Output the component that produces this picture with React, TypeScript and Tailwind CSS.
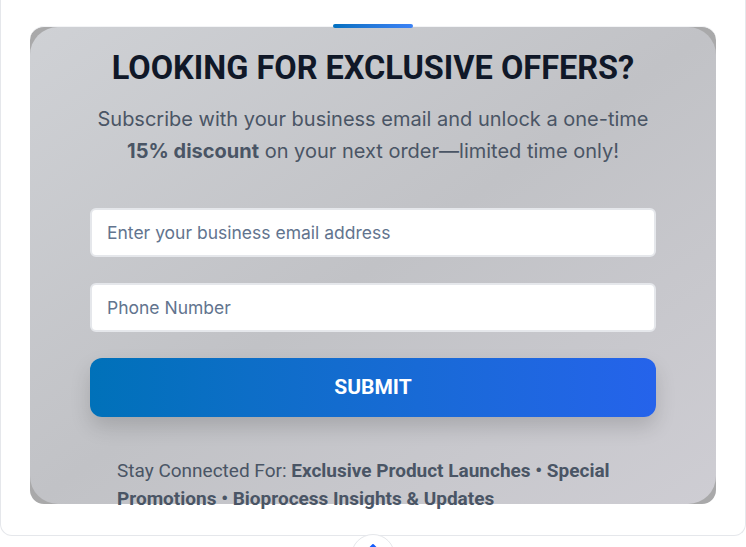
import { ChevronUp } from "lucide-react";

export default function App() {
  return (
    <div className="relative h-[547px] overflow-hidden bg-white font-['Inter',sans-serif]">
      <div className="h-[536px] rounded-b-xl border-x border-b border-gray-200 bg-white px-[29px] pt-[26px]">
        <div className="relative h-[478px] rounded-[14px] border-t border-gray-100 bg-[#a9a9aa]">
          <div className="absolute inset-0 rounded-[28px] bg-gradient-to-br from-[#cfd1d5] via-[#c1c2c6] to-[#cecdd3]" />
          <div className="absolute left-1/2 top-[-3px] h-1 w-20 -translate-x-1/2 rounded-full bg-gradient-to-r from-[#0070c0] to-[#3b82f6]" />

          <div className="relative px-[60px] pt-[21px]">
            <h2 className="text-center font-['Roboto',sans-serif] text-[32.5px] font-bold leading-10 text-gray-900">
              LOOKING FOR EXCLUSIVE OFFERS?
            </h2>
            <p className="mt-[15px] text-center text-[20px] leading-8 text-gray-600">
              Subscribe with your business email and unlock a one-time
              <br />
              <span className="font-bold">15% discount</span> on your next order—limited time only!
            </p>

            <form className="mt-[41px] flex flex-col gap-[26px]">
              <input
                type="email"
                placeholder="Enter your business email address"
                className="h-[49px] w-full rounded-md border-2 border-gray-200 bg-white px-[15px] text-[17.5px] text-gray-800 placeholder:text-slate-500 outline-none"
              />
              <input
                type="tel"
                placeholder="Phone Number"
                className="h-[49px] w-full rounded-md border-2 border-gray-200 bg-white px-[15px] text-[17.5px] text-gray-800 placeholder:text-slate-500 outline-none"
              />
              <button
                type="button"
                className="h-[59px] w-full rounded-xl bg-gradient-to-r from-[#0071b9] to-[#2563eb] font-['Roboto',sans-serif] text-[21px] font-bold text-white shadow-[0_10px_20px_rgba(0,0,0,0.15)]"
              >
                SUBMIT
              </button>
            </form>

            <p className="mt-10 pl-[27px] pr-[20px] font-['Roboto',sans-serif] text-[19px] leading-7 text-gray-600">
              Stay Connected For:{" "}
              <span className="font-bold">
                Exclusive Product Launches • Special Promotions • Bioprocess Insights &amp; Updates
              </span>
            </p>
          </div>
        </div>
      </div>

      <div className="absolute left-1/2 top-[534px] flex h-11 w-11 -translate-x-1/2 items-start justify-center rounded-full border border-gray-200 bg-white pt-1">
        <ChevronUp className="h-4 w-4 text-blue-600" strokeWidth={3} />
      </div>
    </div>
  );
}
